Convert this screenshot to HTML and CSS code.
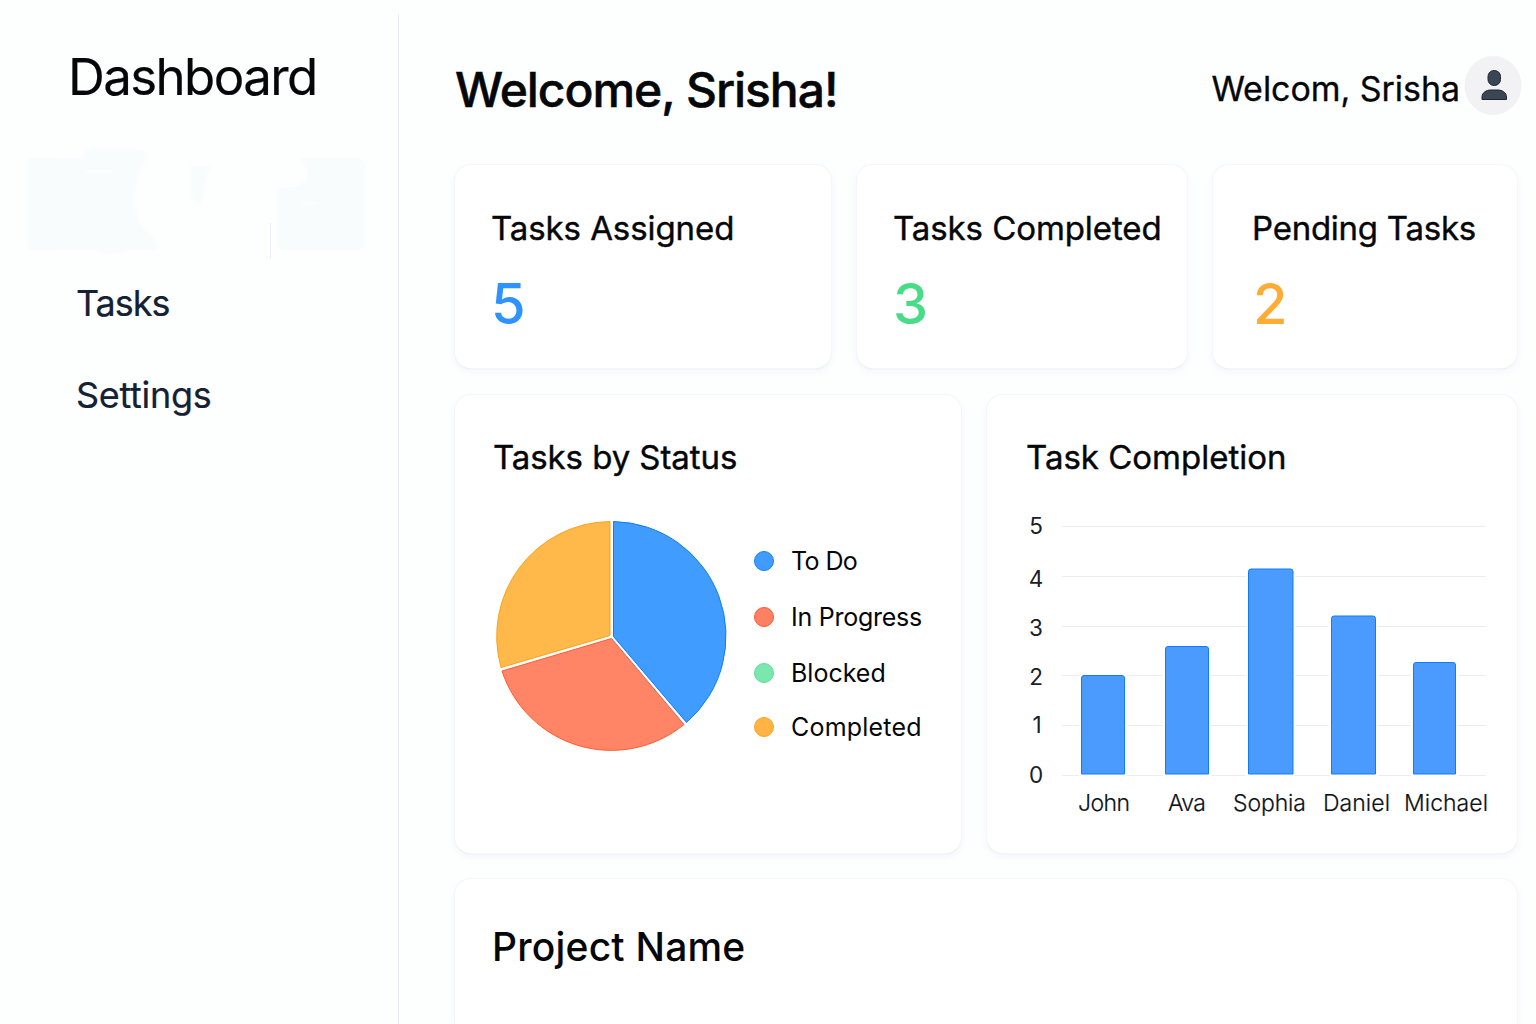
FILE: index.html
```html
<!DOCTYPE html>
<html lang="en">
<head>
<meta charset="utf-8">
<title>Dashboard</title>
<link rel="stylesheet" href="styles.css">
</head>
<body>
<div class="app">
  <aside class="sidebar">
    <div class="brand">Dashboard</div>
    <nav class="nav">
      <div class="nav-active">
        <svg width="344" height="116" viewBox="24 146 344 116" aria-hidden="true">
          <defs><filter id="soft" x="-20%" y="-20%" width="140%" height="140%"><feGaussianBlur stdDeviation="1.500"/></filter></defs>
          <path fill="#f8fcfd" d="M33 158H60V250H33Q27 250 27 244V164Q27 158 33 158Z"/>
          <path fill="#f8fcfd" filter="url(#soft)" d="M58 158H85V153Q87 149 95 149H135Q146 150 148 157Q134 172 134 200Q136 228 153 236L158 250H128Q112 256 98 251L91 250H58Z"/>
          <path fill="#f8fcfd" d="M299 158H359Q365 160 365 167V243Q364 250 357 250H284Q277 249 277 241V190Q280 187 296 187Q310 180 308 170Z"/>
          <path fill="#f8fcfd" filter="url(#soft)" d="M191 166H212Q203 178 201 204Q192 203 191 188Z"/>
          <path fill="#fcfefe" d="M86 170H112V173H86ZM301 202H317V204H301Z"/>
          <path stroke="#eeeff5" d="M270.500 223V259"/>
        </svg>
      </div>
      <a class="nav-item nav-tasks">Tasks</a>
      <a class="nav-item">Settings</a>
    </nav>
  </aside>
  <main class="main">
    <header class="header">
      <h1 class="welcome">Welcome, Srisha!</h1>
      <div class="user">
        <span class="user-name">Welcom, Srisha</span>
        <svg class="avatar" width="58" height="60" viewBox="0 0 58 60" aria-hidden="true">
          <ellipse cx="29" cy="29.500" rx="28.500" ry="29.500" fill="#f2f2f4"/>
          <rect x="24" y="14.500" width="12.500" height="15" rx="6" fill="#3b4654" stroke="#1b2737"/>
          <path d="M18 43.500V41C18 36.500 22.500 34 26.500 34H34C38 34 42.500 36.500 42.500 41V43.500Z" fill="#3b4654" stroke="#1b2737"/>
        </svg>
      </div>
    </header>
    <section class="stats">
      <article class="card stat"><h2 class="title">Tasks Assigned</h2><p class="value blue">5</p></article>
      <article class="card stat"><h2 class="title">Tasks Completed</h2><p class="value green">3</p></article>
      <article class="card stat stat-pending"><h2 class="title">Pending Tasks</h2><p class="value orange">2</p></article>
    </section>
    <section class="charts">
      <article class="card chart">
        <h2 class="title">Tasks by Status</h2>
        <div class="status">
          <svg class="pie" width="234" height="234" viewBox="0 0 234 234" aria-hidden="true">
            <path d="M119.500 3.500A114.500 114.500 0 0 1 192.500 204.500L119.500 118.500Z" fill="#409cff" stroke="#0c7dff"/>
            <path d="M117.500 120.500L190 206.500A115 115 0 0 1 8 153Z" fill="#ff8566" stroke="#ff5a32"/>
            <path d="M116 3.500V117.500L7 149.500A114.800 114.800 0 0 1 116 3.500Z" fill="#ffb84a" stroke="#fba31c"/>
          </svg>
          <ul class="legend">
            <li><i class="dot dot-blue"></i><span class="legend-todo">To Do</span></li>
            <li><i class="dot dot-red"></i><span class="legend-progress">In Progress</span></li>
            <li><i class="dot dot-green"></i><span>Blocked</span></li>
            <li><i class="dot dot-orange"></i><span class="legend-completed">Completed</span></li>
          </ul>
        </div>
      </article>
      <article class="card chart chart-bars">
        <h2 class="title title-completion">Task Completion</h2>
        <svg class="bars" width="476" height="320" viewBox="1020 505 476 320">
          <g stroke="#ecedef"><path d="M1062 526.500H1486M1062 576.500H1486M1062 626.500H1486M1062 675.500H1486M1062 725.500H1486M1062 775.500H1486"/></g>
          <g fill="#fff"><path d="M1079 673H1127V777H1079ZM1163 645H1211V777H1163ZM1246 567H1295V777H1246ZM1329 614H1378V777H1329ZM1411 660H1458V777H1411Z"/></g>
          <g fill="#4b9bff" stroke="#0f7cff">
            <path d="M1081.500 774V678Q1081.500 675.500 1084 675.500H1122Q1124.500 675.500 1124.500 678V774Z"/>
            <path d="M1165.500 774V649Q1165.500 646.500 1168 646.500H1206Q1208.500 646.500 1208.500 649V774Z"/>
            <path d="M1248.500 774V571.500Q1248.500 569 1251 569H1290.500Q1293 569 1293 571.500V774Z"/>
            <path d="M1331.500 774V618.500Q1331.500 616 1334 616H1373Q1375.500 616 1375.500 618.500V774Z"/>
            <path d="M1413.500 774V665Q1413.500 662.500 1416 662.500H1453Q1455.500 662.500 1455.500 665V774Z"/>
          </g>
          <g class="axis" text-anchor="middle">
            <text x="1036" y="533.500">5</text><text x="1036" y="586.500">4</text><text x="1036" y="635.500">3</text><text x="1036" y="684.500">2</text><text x="1037" y="733">1</text><text x="1036" y="783">0</text>
          </g>
          <g class="names">
            <text x="1078" y="811" textLength="52">John</text>
            <text x="1168" y="811" textLength="38">Ava</text>
            <text x="1233" y="811" textLength="73">Sophia</text>
            <text x="1323" y="811" textLength="67">Daniel</text>
            <text x="1404" y="811" textLength="84">Michael</text>
          </g>
        </svg>
      </article>
    </section>
    <section class="card project"><h2 class="project-name">Project Name</h2></section>
  </main>
</div>
</body>
</html>
```
FILE: styles.css
```css
* { box-sizing: border-box; margin: 0; padding: 0; }
body { width: 1536px; height: 1024px; overflow: hidden; background: #fdfefe; color: #060709; font-family: Inter, "Liberation Sans", sans-serif; }
.app { display: flex; height: 1024px; }
.sidebar { width: 399px; margin-top: 14px; border-right: 1px solid #ebecf2; flex: none; }
.brand { height: 132px; padding: 32px 0 0 68px; font-size: 51px; line-height: 61px; letter-spacing: -1.6px; white-space: nowrap; -webkit-text-stroke: .2px currentColor; }
.nav-active { height: 111px; padding-left: 24px; }
.nav-active svg { display: block; }
.nav-item { display: block; height: 92px; padding-left: 76px; font-size: 36px; line-height: 92px; letter-spacing: -.3px; color: #142033; white-space: nowrap; -webkit-text-stroke: .2px currentColor; }
.nav-tasks { letter-spacing: -1px; }
.main { width: 1137px; height: 1024px; padding: 0 19px 0 56px; display: flex; flex-direction: column; }
.header { height: 165px; flex: none; display: flex; justify-content: space-between; align-items: flex-start; margin-right: -5px; white-space: nowrap; }
.welcome { margin-top: 60px; font-size: 48px; line-height: 60px; font-weight: 500; letter-spacing: -1.05px; -webkit-text-stroke: .5px currentColor; }
.user { display: flex; padding-top: 56px; }
.user-name { font-size: 34px; line-height: 66px; margin-right: 4px; letter-spacing: -.05px; -webkit-text-stroke: .3px currentColor; }
.stats { display: grid; grid-template-columns: 376px 330px 304px; gap: 26px; height: 203px; flex: none; }
.charts { display: grid; grid-template-columns: 506px 530px; gap: 26px; height: 458px; margin-top: 27px; flex: none; }
.card { background: #fff; border-radius: 16px; box-shadow: 0 0 0 1px #f5f6f9, 0 1px 1px 0 #d0d2d7, 0 3px 8px #f3f4fa; }
.stat { padding: 43px 0 0 36px; }
.stat-pending { padding-left: 39px; }
.title { font-size: 33px; line-height: 40px; font-weight: 400; letter-spacing: -.08px; white-space: nowrap; -webkit-text-stroke: .4px currentColor; }
.stat-pending .title { letter-spacing: -.25px; }
.title-completion { letter-spacing: 0; padding-left: 1px; }
.value { font-size: 56px; line-height: 60px; margin-top: 26px; font-weight: 500; }
.blue { color: #2e93ff; }
.green { color: #48dc88; }
.orange { color: #ffac35; padding-left: 1px; }
.chart { padding: 42px 0 0 38px; }
.status { display: flex; }
.pie { margin: 41px 0 0 1px; }
.legend { list-style: none; margin: 56px 0 0 26px; }
.legend li { display: flex; align-items: center; height: 56px; font-size: 25px; line-height: 56px; white-space: nowrap; }
.legend li:last-child { height: 52px; line-height: 52px; }
.legend-todo { letter-spacing: -.6px; }
.legend-progress { letter-spacing: -.25px; }
.legend-completed { letter-spacing: .2px; }
.dot { width: 20px; height: 20px; border-radius: 50%; margin-right: 17px; border: 1px solid; }
.dot-blue { background: #409cff; border-color: #127eff; }
.dot-red { background: #ff8063; border-color: #ff5733; }
.dot-green { background: #7ae7ae; border-color: #5fdd99; }
.dot-orange { background: #ffb443; border-color: #fca31f; }
.bars { display: block; margin: 28px 0 0 -5px; }
.axis { font-size: 22.500px; fill: #1a2027; }
.names { font-size: 23px; font-weight: 300; fill: #0d1218; stroke: #0d1218; stroke-width: .2px; }
.project { margin-top: 26px; flex: 1; border-radius: 16px 16px 0 0; padding: 43px 0 0 37px; }
.project-name { font-size: 39px; line-height: 50px; font-weight: 500; letter-spacing: .2px; white-space: nowrap; }
```
